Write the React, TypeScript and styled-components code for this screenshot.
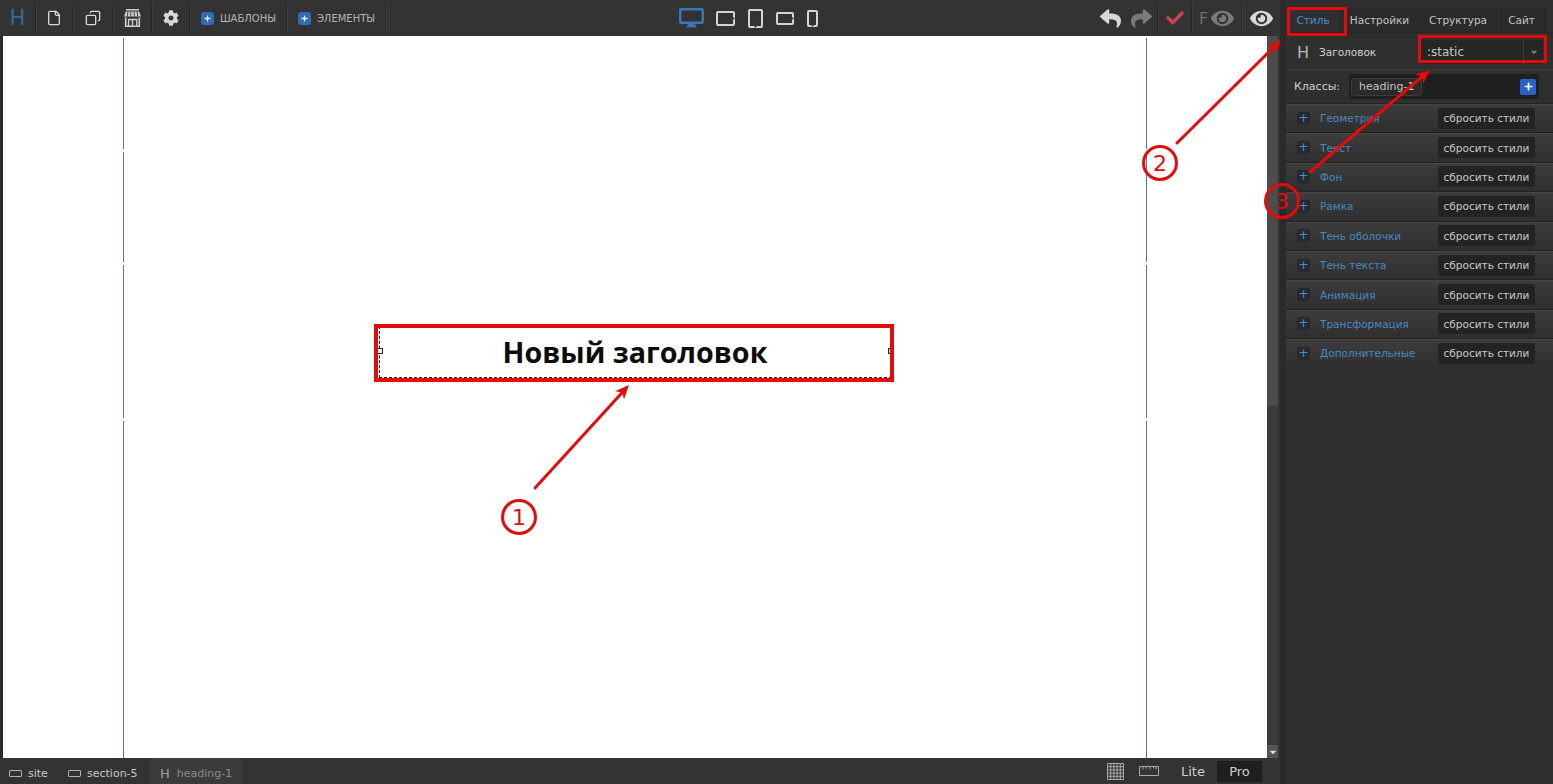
import React from 'react';
import styled, { createGlobalStyle } from 'styled-components';
import { FaCheck, FaCog, FaEye, FaPlus, FaReply, FaShare, FaCaretDown } from 'react-icons/fa';
import { LuCopy, LuFile } from 'react-icons/lu';

const Global = createGlobalStyle`
  html, body { margin: 0; padding: 0; background: #2b2b2b; }
  * { box-sizing: border-box; }
`;

const Page = styled.div`
  position: relative;
  width: 1553px;
  height: 784px;
  overflow: hidden;
  display: grid;
  grid-template-columns: 1fr 267px;
  font-family: "DejaVu Sans", sans-serif;
  background: #2b2b2b;
`;

const Left = styled.div`
  display: flex;
  flex-direction: column;
  min-width: 0;
  border-right: 6px solid #2a2a2a;
`;

const TopBar = styled.div`
  height: 36px;
  flex: none;
  display: grid;
  grid-template-columns: 678px 417px 1fr;
  align-items: center;
  background: #333;
`;

const ToolGroup = styled.div`
  display: flex;
  align-items: center;
  height: 36px;
`;

const ToolCell = styled.div<{ $w: number; $sep?: boolean; $muted?: boolean }>`
  width: ${p => p.$w}px;
  height: 28px;
  flex: none;
  display: flex;
  align-items: center;
  justify-content: center;
  gap: 6px;
  color: ${p => (p.$muted ? '#7a7a7a' : '#d8d8d8')};
  border-right: ${p => (p.$sep === false ? 'none' : '1px solid #262626')};
  box-shadow: ${p => (p.$sep === false ? 'none' : '1px 0 0 #404040')};
`;

const Logo = styled.span`
  font-size: 21px;
  color: #356a9f;
  font-weight: 400;
  line-height: 1;
`;

const PlusBox = styled.span`
  width: 13px;
  height: 13px;
  margin-left: 1px;
  border-radius: 3px;
  background: #2f6db5;
  color: #e4eefa;
  display: inline-flex;
  align-items: center;
  justify-content: center;
  font-size: 7px;
`;

const ToolLabel = styled.span`
  font-size: 10px;
  color: #b4b4b4;
  white-space: nowrap;
`;

const FastLabel = styled.span`
  font-size: 16px;
  color: #6e6e6e;
  margin-right: -3px;
`;

const DeviceGroup = styled.div`
  display: flex;
  align-items: center;
  gap: 13px;
  padding-left: 1px;
`;

const Workspace = styled.div`
  flex: 1;
  display: flex;
  min-height: 0;
  padding-left: 3px;
`;

const Canvas = styled.div`
  flex: 1;
  background: #fff;
  display: grid;
  grid-template-columns: 120px 1fr 120px;
  padding-top: 2px;
`;

const Guide = styled.div<{ $side: 'left' | 'right' }>`
  display: flex;
  flex-direction: column;
  align-items: ${p => (p.$side === 'left' ? 'flex-end' : 'flex-start')};
  margin-left: ${p => (p.$side === 'left' ? '1px' : '-1px')};
  margin-right: ${p => (p.$side === 'left' ? '-1px' : '0')};
  gap: 3px;
`;

const GuideSegment = styled.div<{ $h?: number }>`
  width: 1px;
  background: #4c7f93;
  height: ${p => (p.$h ? `${p.$h}px` : 'auto')};
  flex: ${p => (p.$h ? 'none' : '1')};
`;

const CanvasBody = styled.div`
  display: flex;
  justify-content: center;
  padding-top: 288px;
  padding-right: 6px;
`;

const HeadingBox = styled.div`
  position: relative;
  width: 513px;
  height: 52px;
  margin-left: 6px;
  border: 1px dashed #222;
  display: flex;
  align-items: center;
  justify-content: center;
`;

const Heading = styled.h1`
  margin: 0 0 2px;
  font-family: "Open Sans", sans-serif;
  font-size: 28.7px;
  font-weight: 700;
  color: #0c0c0c;
`;

const Handle = styled.span<{ $side: 'left' | 'right' }>`
  position: absolute;
  top: 21px;
  ${p => p.$side}: -3px;
  width: 6px;
  height: 6px;
  border: 1px solid #222;
  background: #fff;
`;

const Scrollbar = styled.div`
  width: 13px;
  flex: none;
  background: #3a3a3a;
  display: flex;
  flex-direction: column;
  border-right: 2px solid #333;
`;

const ScrollThumb = styled.div`
  height: 370px;
  background: #4c4c4c;
`;

const ScrollTrack = styled.div`
  flex: 1;
`;

const ScrollEnd = styled.div`
  height: 13px;
  background: #555;
  color: #ddd;
  font-size: 10px;
  display: flex;
  align-items: center;
  justify-content: center;
`;

const StatusBar = styled.div`
  height: 26px;
  flex: none;
  background: #333;
  display: flex;
  align-items: stretch;
`;

const Crumb = styled.div<{ $active?: boolean; $w: number }>`
  width: ${p => p.$w}px;
  display: flex;
  align-items: center;
  gap: 6px;
  padding-top: 5px;
  padding-left: ${p => (p.$active ? 10 : 9)}px;
  background: ${p => (p.$active ? '#3b3b3b' : 'transparent')};
  color: ${p => (p.$active ? '#8c8c8c' : '#c8c8c8')};
  font-size: 11px;
`;

const CrumbRect = styled.span`
  width: 13px;
  height: 7px;
  border: 1px solid #b0b0b0;
  border-radius: 1px;
`;

const CrumbH = styled.span`
  font-size: 13px;
  color: #a0a0a0;
  margin-right: 1px;
`;

const StatusRight = styled.div`
  margin-left: auto;
  display: flex;
  align-items: center;
  gap: 15px;
  padding-right: 18px;
`;

const ModeGroup = styled.div`
  display: flex;
  align-items: center;
  margin-left: -5px;
`;

const ModeButton = styled.div<{ $on?: boolean }>`
  width: ${p => (p.$on ? 45 : 48)}px;
  height: 21px;
  margin-top: 1px;
  display: flex;
  align-items: center;
  justify-content: center;
  font-size: 13px;
  color: #cfcfcf;
  background: ${p => (p.$on ? '#1f1f1f' : 'transparent')};
`;

const Panel = styled.div`
  background: #2f2f2f;
  display: flex;
  flex-direction: column;
  padding-top: 8px;
`;

const Tabs = styled.div`
  display: flex;
  height: 25px;
  gap: 1px;
  padding-left: 1px;
  border-bottom: 1px solid #262626;
`;

const Tab = styled.div<{ $w: number; $on?: boolean }>`
  width: ${p => p.$w}px;
  display: flex;
  align-items: center;
  justify-content: center;
  font-size: 10.5px;
  color: ${p => (p.$on ? '#4d8fcc' : '#c4c4c4')};
  background: ${p => (p.$on ? '#2f2f2f' : '#2a2a2a')};
  border-right: 1px solid #242424;
`;

const TitleRow = styled.div`
  height: 37px;
  display: flex;
  align-items: center;
  padding: 2px 0 0 11px;
  border-bottom: 1px solid #3c3c3c;
`;

const TitleH = styled.span`
  font-size: 16px;
  color: #b8b8b8;
  width: 22px;
`;

const TitleText = styled.span`
  font-size: 10.5px;
  color: #cfcfcf;
  width: 102px;
`;

const Select = styled.div`
  width: 122px;
  height: 24px;
  background: #262626;
  display: flex;
  align-items: center;
  justify-content: space-between;
  padding-left: 6px;
  font-size: 12px;
  color: #c8c8c8;
`;

const SelectArrow = styled.span`
  width: 20px;
  height: 24px;
  border-left: 1px solid #3c3c3c;
  color: #777;
  font-size: 10px;
  display: flex;
  align-items: center;
  justify-content: center;
`;

const ClassRow = styled.div`
  height: 33px;
  display: flex;
  align-items: center;
  padding-left: 8px;
`;

const ClassLabel = styled.span`
  width: 55px;
  font-size: 11px;
  color: #cfcfcf;
`;

const ClassInput = styled.div`
  width: 190px;
  height: 25px;
  background: #1f1f1f;
  border-radius: 3px;
  display: flex;
  align-items: center;
  justify-content: space-between;
  padding: 0 3px 0 2px;
`;

const ClassTag = styled.span`
  width: 71px;
  height: 18px;
  border: 1px solid #3d3d3d;
  border-radius: 3px;
  background: #2a2a2a;
  color: #c4c4c4;
  font-size: 11px;
  line-height: 16px;
  padding-left: 7px;
`;

const AddClass = styled.span`
  width: 16px;
  height: 16px;
  border-radius: 2px;
  background: #2a62c8;
  color: #fff;
  font-size: 9px;
  display: flex;
  align-items: center;
  justify-content: center;
`;

const Rows = styled.div`
  display: flex;
  flex-direction: column;
`;

const Row = styled.div`
  height: 29.4px;
  display: flex;
  align-items: center;
  padding: 0 18px 0 11px;
  background: linear-gradient(#3d3d3d, #2f2f2f);
  border-top: 1px solid #222;
  box-shadow: inset 0 1px 0 #474747;
`;

const RowPlus = styled.span`
  width: 13px;
  height: 13px;
  border-radius: 2px;
  background: #262a2e;
  color: #4d8fcc;
  font-size: 12px;
  line-height: 13px;
  text-align: center;
  margin-right: 10px;
`;

const RowLabel = styled.span`
  flex: 1;
  font-size: 10.5px;
  color: #4a88c0;
`;

const ResetButton = styled.span`
  width: 97px;
  height: 21px;
  border-radius: 2px;
  background: #232323;
  color: #c8c8c8;
  font-size: 10.5px;
  display: flex;
  align-items: center;
  justify-content: center;
`;

// annotations painted over the screenshot
const Frame = styled.div<{ $x: number; $y: number; $w: number; $h: number; $b: number }>`
  position: absolute;
  left: ${p => p.$x}px;
  top: ${p => p.$y}px;
  width: ${p => p.$w}px;
  height: ${p => p.$h}px;
  border: ${p => p.$b}px solid #e60b0b;
  pointer-events: none;
`;

const Marker = styled.div<{ $x: number; $y: number }>`
  position: absolute;
  left: ${p => p.$x - 18}px;
  top: ${p => p.$y - 18}px;
  width: 36px;
  height: 36px;
  border: 3px solid #e60b0b;
  border-radius: 50%;
  color: #e60b0b;
  font-size: 22px;
  display: flex;
  align-items: center;
  justify-content: center;
`;

const ArrowLayer = styled.svg`
  position: absolute;
  left: 0;
  top: 0;
  pointer-events: none;
`;

const Arrow = ({ x1, y1, x2, y2 }: { x1: number; y1: number; x2: number; y2: number }) => {
  const a = Math.atan2(y2 - y1, x2 - x1);
  const pt = (d: number, s: number) =>
    `${x2 - Math.cos(a) * d - Math.sin(a) * s},${y2 - Math.sin(a) * d + Math.cos(a) * s}`;
  return (
    <g>
      <line x1={x1} y1={y1} x2={x2 - Math.cos(a) * 8} y2={y2 - Math.sin(a) * 8} stroke="#e60b0b" strokeWidth="3" strokeLinecap="round" />
      <polygon points={`${x2},${y2} ${pt(14, 6)} ${pt(10, 0)} ${pt(14, -6)}`} fill="#e60b0b" />
    </g>
  );
};

const Desktop = () => (
  <svg width="25" height="20" viewBox="0 0 25 20" style={{ marginRight: -1 }}>
    <rect x="1.2" y="1.2" width="22.6" height="13.6" rx="1" fill="none" stroke="#3a76b8" strokeWidth="2.4" />
    <path d="M9.5 16h6l1 2h-8z" fill="#3a76b8" />
    <rect x="7.5" y="17.5" width="10" height="1.8" fill="#3a76b8" />
  </svg>
);

const Device = ({ w, h }: { w: number; h: number }) => (
  <svg width={w} height={h} viewBox={`0 0 ${w} ${h}`}>
    <rect x="1" y="1" width={w - 2} height={h - 2} rx="1" fill="none" stroke="#d4d4d4" strokeWidth="2" />
    {w > h ? (
      <circle cx={w - 1.5} cy={h / 2} r="1.1" fill="#333" />
    ) : (
      <circle cx={w / 2} cy={h - 1.5} r="1.1" fill="#333" />
    )}
  </svg>
);

const StoreIcon = () => (
  <svg width="17" height="18" viewBox="0 0 17 18" fill="none">
    <path d="M2 .7h13" stroke="#cfcfcf" strokeWidth="1.6" />
    <path d="M1.8 2.5h13.4L17 7.6H0z" fill="#cfcfcf" />
    <path d="M4 2.5 3.2 7.6M7 2.5l-.4 5.1M10 2.5l.4 5.1M13 2.5l.8 5.1" stroke="#333" strokeWidth=".9" />
    <path d="M1.7 8.5v8.7h13.6V8.5" stroke="#cfcfcf" strokeWidth="1.6" />
    <path d="M4.2 10.5h8.6v6.7" stroke="#cfcfcf" strokeWidth="1.4" />
    <path d="M4.6 10.5v6.7M8.5 10.5v6.7" stroke="#cfcfcf" strokeWidth="1.4" />
  </svg>
);

const GridIcon = () => (
  <svg width="17" height="17" viewBox="0 0 17 17" stroke="#a8a8a8" fill="none">
    <path d="M.5.5h16v16H.5zM.5 3.7h16M.5 6.9h16M.5 10.1h16M.5 13.3h16M3.7.5v16M6.9.5v16M10.1.5v16M13.3.5v16" />
  </svg>
);

const RulerIcon = () => (
  <svg width="20" height="10" viewBox="0 0 20 10" stroke="#a8a8a8" fill="none">
    <path d="M.5.5h19v9H.5zM4 .5v3M7.5 .5v2M11 .5v3M14.5 .5v2M17 .5v3" />
  </svg>
);

const sections = ['Геометрия', 'Текст', 'Фон', 'Рамка', 'Тень оболочки', 'Тень текста', 'Анимация', 'Трансформация', 'Дополнительные'];

const App = () => (
  <Page>
    <Global />
    <Left>
      <TopBar>
        <ToolGroup>
          <ToolCell $w={36}><Logo>H</Logo></ToolCell>
          <ToolCell $w={37}><LuFile size={16} /></ToolCell>
          <ToolCell $w={40}><LuCopy size={16} style={{ transform: 'scaleX(-1)' }} /></ToolCell>
          <ToolCell $w={39}><StoreIcon /></ToolCell>
          <ToolCell $w={38}><FaCog size={16} /></ToolCell>
          <ToolCell $w={97}><PlusBox><FaPlus /></PlusBox><ToolLabel>ШАБЛОНЫ</ToolLabel></ToolCell>
          <ToolCell $w={99}><PlusBox><FaPlus /></PlusBox><ToolLabel>ЭЛЕМЕНТЫ</ToolLabel></ToolCell>
        </ToolGroup>
        <DeviceGroup>
          <Desktop />
          <Device w={19} h={15} />
          <Device w={15} h={19} />
          <Device w={18} h={13} />
          <Device w={11} h={17} />
        </DeviceGroup>
        <ToolGroup>
          <ToolCell $w={63} style={{ gap: 10 }}>
            <FaReply size={21} />
            <FaShare size={21} color="#7a7a7a" />
          </ToolCell>
          <ToolCell $w={34}><FaCheck size={18} color="#c8434a" /></ToolCell>
          <ToolCell $w={50} $muted>
            <FastLabel>F</FastLabel>
            <FaEye size={23} />
          </ToolCell>
          <ToolCell $w={38} $sep={false}><FaEye size={23} /></ToolCell>
        </ToolGroup>
      </TopBar>
      <Workspace>
        <Canvas>
          <Guide $side="left">
            <GuideSegment $h={111} />
            <GuideSegment $h={110} />
            <GuideSegment $h={153} />
            <GuideSegment />
          </Guide>
          <CanvasBody>
            <HeadingBox>
              <Handle $side="left" />
              <Heading>Новый заголовок</Heading>
              <Handle $side="right" />
            </HeadingBox>
          </CanvasBody>
          <Guide $side="right">
            <GuideSegment $h={111} />
            <GuideSegment $h={110} />
            <GuideSegment $h={153} />
            <GuideSegment />
          </Guide>
        </Canvas>
        <Scrollbar>
          <ScrollThumb />
          <ScrollTrack />
          <ScrollEnd><FaCaretDown /></ScrollEnd>
        </Scrollbar>
      </Workspace>
      <StatusBar>
        <Crumb $w={59}><CrumbRect />site</Crumb>
        <Crumb $w={91}><CrumbRect />section-5</Crumb>
        <Crumb $w={92} $active><CrumbH>H</CrumbH>heading-1</Crumb>
        <StatusRight>
          <GridIcon />
          <RulerIcon />
          <ModeGroup>
            <ModeButton>Lite</ModeButton>
            <ModeButton $on>Pro</ModeButton>
          </ModeGroup>
        </StatusRight>
      </StatusBar>
    </Left>
    <Panel>
      <Tabs>
        <Tab $w={53} $on>Стиль</Tab>
        <Tab $w={78}>Настройки</Tab>
        <Tab $w={77}>Структура</Tab>
        <Tab $w={48}>Сайт</Tab>
      </Tabs>
      <TitleRow>
        <TitleH>H</TitleH>
        <TitleText>Заголовок</TitleText>
        <Select>:static<SelectArrow><FaCaretDown /></SelectArrow></Select>
      </TitleRow>
      <ClassRow>
        <ClassLabel>Классы:</ClassLabel>
        <ClassInput>
          <ClassTag>heading-1</ClassTag>
          <AddClass><FaPlus /></AddClass>
        </ClassInput>
      </ClassRow>
      <Rows>
        {sections.map(s => (
          <Row key={s}>
            <RowPlus>+</RowPlus>
            <RowLabel>{s}</RowLabel>
            <ResetButton>сбросить стили</ResetButton>
          </Row>
        ))}
      </Rows>
    </Panel>

    <Frame $x={374} $y={324} $w={520} $h={58} $b={4} />
    <Frame $x={1287} $y={7} $w={60} $h={29} $b={3} />
    <Frame $x={1418} $y={35} $w={129} $h={28} $b={3} />
    <ArrowLayer width="1553" height="784">
      <Arrow x1={535} y1={488} x2={629} y2={385} />
      <Arrow x1={1177} y1={143} x2={1281} y2={40} />
      <Arrow x1={1310} y1={172} x2={1430} y2={70} />
    </ArrowLayer>
    <Marker $x={519} $y={517}>1</Marker>
    <Marker $x={1160} $y={163}>2</Marker>
    <Marker $x={1282} $y={201}>3</Marker>
  </Page>
);

export default App;
